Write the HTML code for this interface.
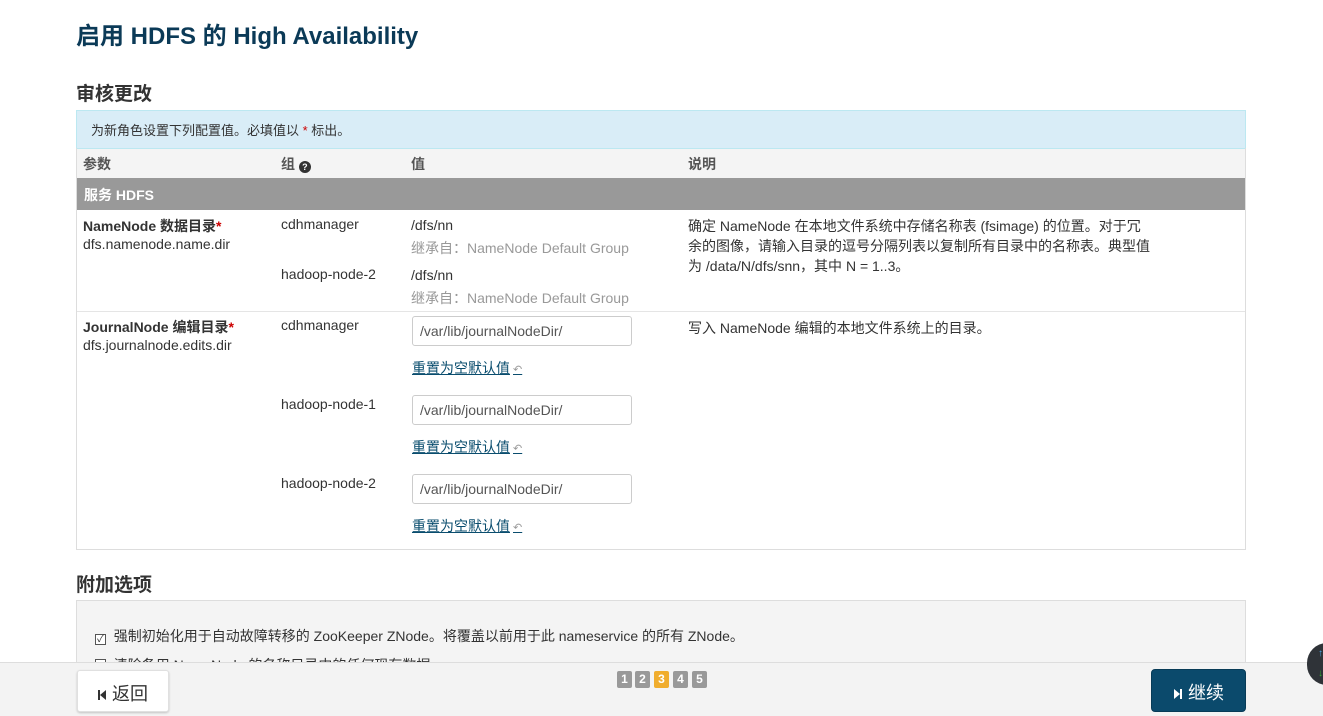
<!DOCTYPE html>
<html><head><meta charset="utf-8"><style>
*{margin:0;padding:0;box-sizing:border-box}
body{width:1323px;height:716px;overflow:hidden;background:#fff;font-family:"Liberation Sans","Noto Sans CJK SC",sans-serif;font-size:14px;color:#333;position:relative}
.a{position:absolute;white-space:nowrap}
h1{position:absolute;left:76px;top:16px;font-size:24px;color:#0b3a57;font-weight:bold}
h2{position:absolute;font-size:19px;font-weight:bold;color:#333}
.g{color:#999}
.inp{position:absolute;left:412px;width:220px;height:30px;border:1px solid #ccc;border-radius:3px;padding:6px 7px;font-size:14px;color:#555}
.lnk{position:absolute;left:412px;color:#0a4d6e;text-decoration:underline;font-size:14px}
.lnk span{color:#999;text-decoration:none;font-size:11px;margin-left:3px}
.pg{position:absolute;top:671px;width:15px;height:17px;background:#999;color:#fff;font-size:12px;font-weight:bold;text-align:center;line-height:17px;border-radius:2px}
.ic{display:inline-block;vertical-align:middle;margin-right:6px}
</style></head><body>
<h1>启用 HDFS 的 High Availability</h1>
<h2 style="left:76px;top:79px">审核更改</h2>
<div class="a" style="left:76px;top:110px;width:1170px;height:39px;background:#d9edf7;border:1px solid #bce8f1;padding:9px 14px;color:#333;font-size:13px">为新角色设置下列配置值。必填值以 <span style="color:#c00">*</span> 标出。</div>
<div class="a" style="left:76px;top:148px;width:1170px;height:402px;border:1px solid #ddd;border-top:none"></div>
<div class="a" style="left:77px;top:149px;width:1168px;height:29px;background:#f4f4f4"></div>
<div class="a" style="left:83px;top:154px;color:#555;font-weight:bold">参数</div>
<div class="a" style="left:281px;top:154px;color:#555;font-weight:bold">组 <span style="display:inline-block;width:12px;height:12px;border-radius:6px;background:#333;color:#fff;font-size:9px;text-align:center;line-height:12px;font-weight:bold;vertical-align:-1px">?</span></div>
<div class="a" style="left:411px;top:154px;color:#555;font-weight:bold">值</div>
<div class="a" style="left:688px;top:154px;color:#555;font-weight:bold">说明</div>
<div class="a" style="left:77px;top:178px;width:1168px;height:32px;background:#999;color:#fff;font-weight:bold;padding:7px 7px">服务 HDFS</div>
<div class="a" style="left:83px;top:216px;font-weight:bold">NameNode 数据目录<span style="color:#c00">*</span></div>
<div class="a" style="left:83px;top:236px">dfs.namenode.name.dir</div>
<div class="a" style="left:281px;top:216px">cdhmanager</div>
<div class="a" style="left:411px;top:217px">/dfs/nn</div>
<div class="a g" style="left:411px;top:238px">继承自：NameNode Default Group</div>
<div class="a" style="left:281px;top:266px">hadoop-node-2</div>
<div class="a" style="left:411px;top:267px">/dfs/nn</div>
<div class="a g" style="left:411px;top:288px">继承自：NameNode Default Group</div>
<div class="a" style="left:688px;top:216px;line-height:20px">确定 NameNode 在本地文件系统中存储名称表 (fsimage) 的位置。对于冗<br>余的图像，请输入目录的逗号分隔列表以复制所有目录中的名称表。典型值<br>为 /data/N/dfs/snn，其中 N = 1..3。</div>
<div class="a" style="left:77px;top:311px;width:1168px;border-top:1px solid #e5e5e5"></div>
<div class="a" style="left:83px;top:317px;font-weight:bold">JournalNode 编辑目录<span style="color:#c00">*</span></div>
<div class="a" style="left:83px;top:337px">dfs.journalnode.edits.dir</div>
<div class="a" style="left:281px;top:317px">cdhmanager</div>
<div class="a" style="left:281px;top:396px">hadoop-node-1</div>
<div class="a" style="left:281px;top:475px">hadoop-node-2</div>
<div class="inp" style="top:316px">/var/lib/journalNodeDir/</div>
<div class="lnk" style="top:358px">重置为空默认值<span>↶</span></div>
<div class="inp" style="top:395px">/var/lib/journalNodeDir/</div>
<div class="lnk" style="top:437px">重置为空默认值<span>↶</span></div>
<div class="inp" style="top:474px">/var/lib/journalNodeDir/</div>
<div class="lnk" style="top:516px">重置为空默认值<span>↶</span></div>
<div class="a" style="left:688px;top:318px">写入 NameNode 编辑的本地文件系统上的目录。</div>
<h2 style="left:76px;top:570px">附加选项</h2>
<div class="a" style="left:76px;top:600px;width:1170px;height:80px;background:#f4f4f4;border:1px solid #ddd"></div>
<div class="a" style="left:95px;top:626px"><span style="display:inline-block;width:11px;height:11px;border:1px solid #555;background:#fff;font-size:10px;line-height:9px;text-align:center;vertical-align:-1px">✓</span>&nbsp; 强制初始化用于自动故障转移的 ZooKeeper ZNode。将覆盖以前用于此 nameservice 的所有 ZNode。</div>
<div class="a" style="left:95px;top:655px"><span style="display:inline-block;width:11px;height:11px;border:1px solid #555;background:#fff"></span>&nbsp; 清除备用 NameNode 的名称目录中的任何现有数据</div>
<div class="a" style="left:0;top:662px;width:1323px;height:54px;background:#f3f3f3;border-top:1px solid #ddd"></div>
<div class="a" style="left:77px;top:670px;width:92px;height:42px;background:#fff;border:1px solid #e0e0e0;border-radius:3px;box-shadow:0 1px 2px rgba(0,0,0,.2);font-size:18px;padding:9px 0 0 20px;color:#333"><svg class="ic" width="8" height="10"><rect x="0" y="0" width="2" height="10" fill="#333"/><path d="M8 0L2 5L8 10Z" fill="#333"/></svg>返回</div>
<div class="pg" style="left:617px">1</div>
<div class="pg" style="left:635px">2</div>
<div class="pg" style="left:654px;background:#f0ad2e">3</div>
<div class="pg" style="left:673px">4</div>
<div class="pg" style="left:692px">5</div>
<div class="a" style="left:1151px;top:669px;width:95px;height:43px;background:#0b4a6c;border:1px solid #083b57;border-radius:4px;color:#fff;font-size:18px;padding:9px 0 0 22px"><svg class="ic" width="8" height="10"><path d="M0 0L6 5L0 10Z" fill="#fff"/><rect x="6" y="0" width="2" height="10" fill="#fff"/></svg>继续</div>
<div class="a" style="left:1307px;top:643px;width:40px;height:42px;border-radius:21px;background:#2f3338"></div>
<div class="a" style="left:1318px;top:648px;color:#4aa3df;font-size:10px">↑</div>
<div class="a" style="left:1318px;top:668px;color:#3a3;font-size:10px">↓</div>
</body></html>
